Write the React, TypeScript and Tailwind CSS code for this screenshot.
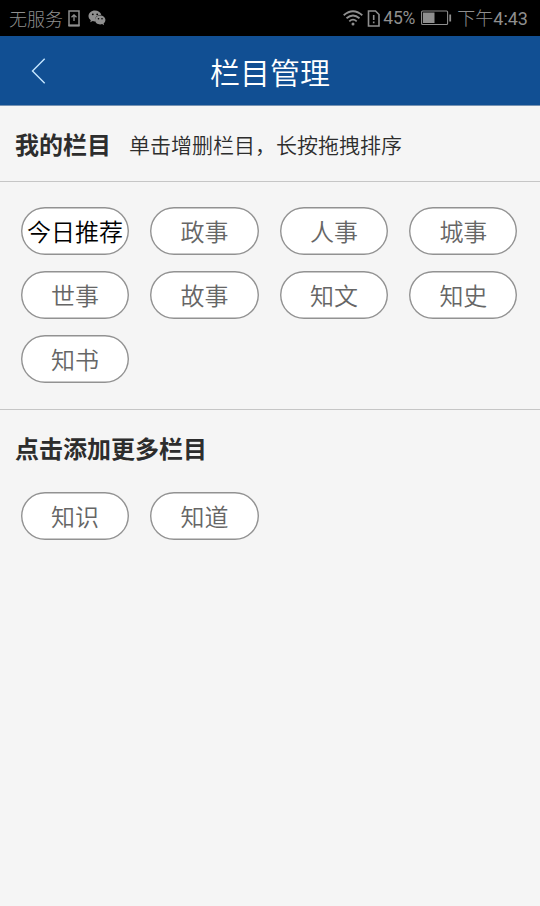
import { ReactNode } from "react";

interface ChannelGridProps {
  channels: string[];
  fixed?: string;
}

const myChannels = ["今日推荐", "政事", "人事", "城事", "世事", "故事", "知文", "知史", "知书"];
const moreChannels = ["知识", "知道"];

function StatusBar() {
  return (
    <div className="flex h-9 items-center justify-between bg-black pl-[9px] pr-3 text-[18px] leading-9 font-light text-[#8f8f8f]">
      <div className="flex items-center">
        <span>无服务</span>
        <svg className="ml-[5px]" width="12" height="17" viewBox="0 0 12 17" fill="none" stroke="currentColor">
          <path d="M1 1H11V15.5H1Z" strokeWidth="1.5" />
          <path d="M0.5 15.5H11.5" strokeWidth="2" />
          <path d="M6 11V5M3.5 7.3L6 4.8L8.5 7.3" strokeWidth="1.3" />
        </svg>
        <svg className="ml-2" width="18" height="16" viewBox="0 0 18 16">
          <path
            d="M7 0.5C3.2 0.5 0.5 3 0.5 6C0.5 7.8 1.4 9.2 2.8 10.2L2.2 12.3L4.7 11.1Q6 11.5 7.2 11.4Q6 5.5 13.3 4.8C12.6 2.2 10 0.5 7 0.5Z"
            fill="currentColor"
          />
          <path
            d="M12.2 5.6C9.2 5.6 7 7.6 7 10C7 12.5 9.3 14.4 12.2 14.4Q13.2 14.4 14.1 14.1L16.1 15.2L15.6 13.4C16.7 12.6 17.4 11.4 17.4 10C17.4 7.6 15.1 5.6 12.2 5.6Z"
            fill="currentColor"
          />
          <g fill="#000">
            <circle cx="4.8" cy="4.3" r="0.9" />
            <circle cx="9.2" cy="4.3" r="0.9" />
            <circle cx="10.5" cy="8.7" r="0.8" />
            <circle cx="14" cy="8.7" r="0.8" />
          </g>
        </svg>
      </div>
      <div className="flex items-center">
        <svg width="20" height="16" viewBox="0 0 20 16" fill="none" stroke="currentColor" strokeWidth="1.8">
          <path d="M0.7 5.2Q10 -2.8 19.3 5.2M3.5 8.3Q10 2.6 16.5 8.3M6.3 11.3Q10 8 13.7 11.3" />
          <circle cx="10" cy="14" r="1.5" fill="currentColor" stroke="none" />
        </svg>
        <svg className="ml-[4px]" width="13" height="17" viewBox="0 0 13 17" fill="none" stroke="currentColor" strokeWidth="1.6">
          <path d="M1.5 1H8.5L12 4.5V16H1.5Z" />
          <path d="M6.7 5V10M6.7 11.6V13.2" />
        </svg>
        <span className="ml-[3px] w-[34px] font-[Roboto] text-[17.5px] font-normal tracking-[-0.2px] whitespace-nowrap">45%</span>
        <svg className="ml-[4px]" width="31" height="16" viewBox="0 0 31 16" fill="none" stroke="currentColor">
          <rect x="0.6" y="1" width="26" height="13.5" rx="1" strokeWidth="1.1" />
          <rect x="2" y="2.5" width="11.5" height="10.5" fill="currentColor" stroke="none" />
          <path d="M29.2 4.5V11.5" strokeWidth="1.8" />
        </svg>
        <span className="ml-[5px] whitespace-nowrap">
          下午<span className="font-[Roboto] font-normal">4:43</span>
        </span>
      </div>
    </div>
  );
}

function Header({ title }: { title: string }) {
  return (
    <header className="grid h-[70px] grid-cols-[1fr_auto_1fr] items-center border-b border-[#7793b3] bg-[#114f93] text-white">
      <svg className="ml-[31px]" width="15" height="26" viewBox="0 0 15 26" fill="none" stroke="#c5e6ff" strokeWidth="1.4">
        <path d="M13.7 0.7L1.5 13L13.7 25.3" />
      </svg>
      <h1 className="text-[30px] leading-[44px] font-[350]">{title}</h1>
    </header>
  );
}

function SectionTitle({ children }: { children: ReactNode }) {
  return <h2 className="text-[24px] leading-9 font-bold text-[#2d2d2d]">{children}</h2>;
}

function ChannelGrid({ channels, fixed }: ChannelGridProps) {
  return (
    <div className="grid grid-cols-4 gap-x-[21.4px] gap-y-4 pl-[21px] pr-[22.6px]">
      {channels.map((name) => (
        <button
          key={name}
          className={`h-12 rounded-full bg-white text-[24px] leading-[48px] font-[350] whitespace-nowrap shadow-[inset_0_0_0_1.4px_#929292] ${
            name === fixed ? "text-black" : "text-[#666666]"
          }`}
        >
          {name}
        </button>
      ))}
    </div>
  );
}

export default function App() {
  return (
    <div className="min-h-screen bg-[#f5f5f5] font-['Noto_Sans_CJK_SC',sans-serif]">
      <StatusBar />
      <Header title="栏目管理" />
      <section className="border-b border-[#c6c6c6] pb-[26px]">
        <div className="mb-[25px] flex h-[76px] items-center border-b border-[#c6c6c6] pl-[15px]">
          <SectionTitle>我的栏目</SectionTitle>
          <p className="relative top-px ml-[18px] text-[21px] font-[350] text-[#2d2d2d]">单击增删栏目，长按拖拽排序</p>
        </div>
        <ChannelGrid channels={myChannels} fixed="今日推荐" />
      </section>
      <section>
        <div className="flex h-[82px] items-start pt-5 pl-[15px]">
          <SectionTitle>点击添加更多栏目</SectionTitle>
        </div>
        <ChannelGrid channels={moreChannels} />
      </section>
    </div>
  );
}
